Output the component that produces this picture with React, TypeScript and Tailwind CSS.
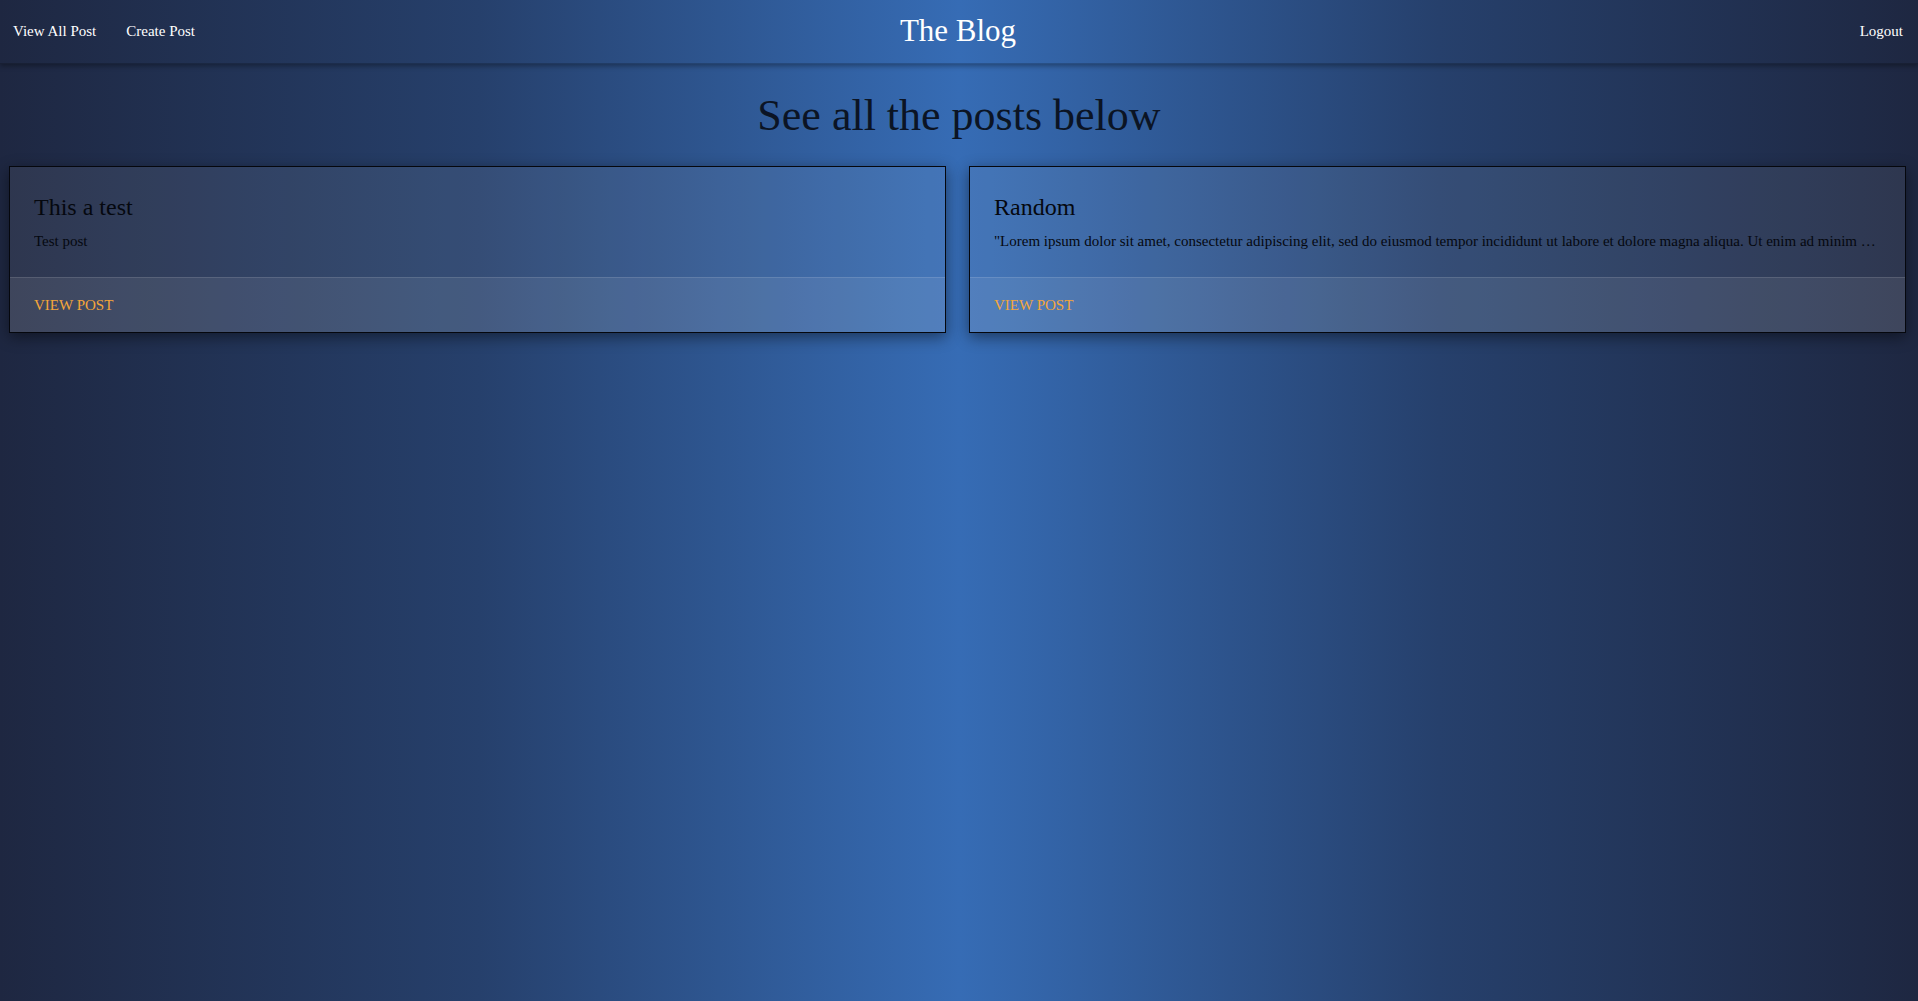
import React from "react";

const serif = { fontFamily: '"Liberation Serif", "Times New Roman", serif' };

function PostCard({ title, body }: { title: string; body: string }) {
  return (
    <div className="min-w-0 flex-1 border border-[#05070d] bg-white/[0.07] shadow-[0_4px_14px_rgba(0,0,0,0.45)]">
      <div className="px-6 pt-6 pb-6">
        <h2 className="text-[24px] leading-[32px] text-[#05080f] mb-[7px]">{title}</h2>
        <p className="text-[15px] leading-[22.5px] text-[#05080f] truncate">{body}</p>
      </div>
      <div className="border-t border-white/[0.12] bg-white/[0.08] px-6 py-[15px]">
        <span className="text-[15px] leading-[22.5px] text-[#f5a63a]">VIEW POST</span>
      </div>
    </div>
  );
}

export default function App() {
  return (
    <div
      className="min-h-[1001px] w-full bg-[linear-gradient(90deg,#1e2741_0%,#26406c_25%,#366cb5_50%,#26406c_75%,#1e2741_100%)]"
      style={serif}
    >
      <nav className="relative z-10 flex h-16 items-center justify-between border-b border-black/20 pl-[13px] pr-[15px] shadow-[0_2px_5px_rgba(0,0,0,0.35)]">
        <div className="flex flex-1 items-center gap-[30px] text-[15px] text-white">
          <span>View All Post</span>
          <span>Create Post</span>
        </div>
        <div className="text-[31px] text-white">The Blog</div>
        <div className="flex flex-1 justify-end text-[15px] text-white">
          <span>Logout</span>
        </div>
      </nav>
      <h1 className="mt-[27px] text-center text-[44px] leading-[50px] text-[#0b1424]">See all the posts below</h1>
      <div className="mt-[25px] flex gap-[23px] pl-[9px] pr-[12px]">
        <PostCard title="This a test" body="Test post" />
        <PostCard
          title="Random"
          body={'"Lorem ipsum dolor sit amet, consectetur adipiscing elit, sed do eiusmod tempor incididunt ut labore et dolore magna aliqua. Ut enim ad minim veniam, quis nostrud exercitation ullamco laboris nisi ut aliquip ex ea commodo consequat."'}
        />
      </div>
    </div>
  );
}
